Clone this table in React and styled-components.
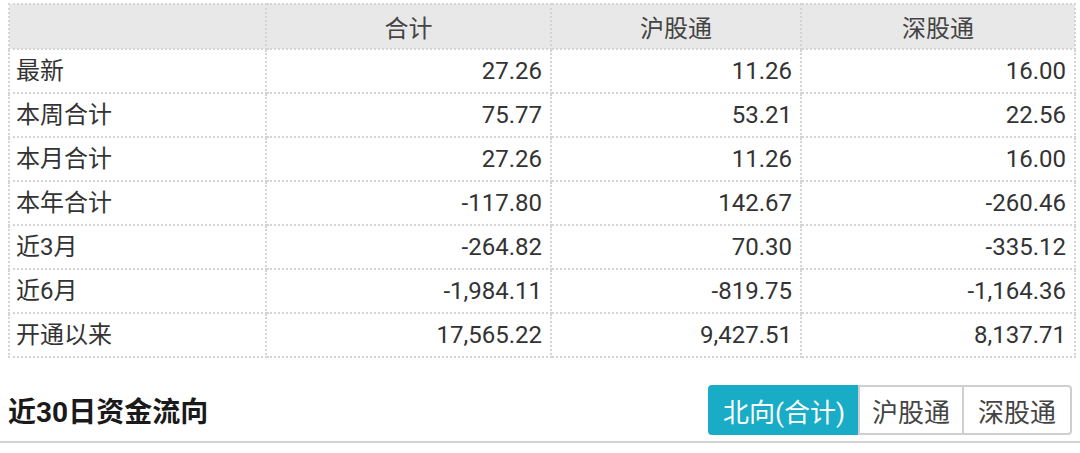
import React from "react";
import styled, { createGlobalStyle } from "styled-components";

const Global = createGlobalStyle`
  html, body { margin: 0; padding: 0; background: #fff; }
  body { font-family: Roboto, "Noto Sans CJK SC", "Noto Sans", sans-serif; }
`;

const Page = styled.div`
  width: 1080px;
  padding-top: 3px;
`;

const Table = styled.table`
  margin-left: 8px;
  width: 1066px;
  border-collapse: collapse;
  table-layout: fixed;
  border: 2px dotted #cfcfcf;
  font-size: 24px;
  color: #333;
`;

const Th = styled.th`
  height: 43px;
  background: #e8e8e8;
  font-weight: normal;
  text-align: center;
  border: 2px dotted #d4d4d4;
  color: #444;
  padding: 0;
`;

const Td = styled.td`
  height: 42px;
  border: 2px dotted #d4d4d4;
  padding: 0 ${(p) => (p.$label ? "0 0 6px" : "8px 0 0")};
  text-align: ${(p) => (p.$label ? "left" : "right")};
  white-space: nowrap;
  line-height: 1;
`;

const Bar = styled.div`
  display: flex;
  align-items: center;
  justify-content: space-between;
  margin-top: 27px;
  padding: 0 8px 6px 8px;
  border-bottom: 2px solid #d2d2d2;
`;

const Title = styled.h2`
  margin: 0;
  font-size: 28px;
  font-weight: bold;
  color: #1a1a1a;
`;

const Group = styled.div`
  display: flex;
`;

const Tab = styled.button`
  height: 50px;
  padding: 0 ${(p) => p.$pad}px;
  font-family: inherit;
  font-size: 26px;
  border: 2px solid ${(p) => (p.$active ? "#18acc6" : "#cfcfcf")};
  margin-left: -2px;
  background: ${(p) => (p.$active ? "#18acc6" : "#fff")};
  color: ${(p) => (p.$active ? "#fff" : "#444")};
  cursor: pointer;
  &:first-child { border-radius: 4px 0 0 4px; margin-left: 0; }
  &:last-child { border-radius: 0 4px 4px 0; }
`;

const rows = [
  ["最新", "27.26", "11.26", "16.00"],
  ["本周合计", "75.77", "53.21", "22.56"],
  ["本月合计", "27.26", "11.26", "16.00"],
  ["本年合计", "-117.80", "142.67", "-260.46"],
  ["近3月", "-264.82", "70.30", "-335.12"],
  ["近6月", "-1,984.11", "-819.75", "-1,164.36"],
  ["开通以来", "17,565.22", "9,427.51", "8,137.71"],
];

export default function App() {
  return (
    <Page>
      <Global />
      <Table>
        <colgroup>
          <col style={{ width: 257 }} />
          <col style={{ width: 285 }} />
          <col style={{ width: 250 }} />
          <col style={{ width: 274 }} />
        </colgroup>
        <thead>
          <tr>
            <Th></Th>
            <Th>合计</Th>
            <Th>沪股通</Th>
            <Th>深股通</Th>
          </tr>
        </thead>
        <tbody>
          {rows.map((r) => (
            <tr key={r[0]}>
              <Td $label>{r[0]}</Td>
              <Td>{r[1]}</Td>
              <Td>{r[2]}</Td>
              <Td>{r[3]}</Td>
            </tr>
          ))}
        </tbody>
      </Table>
      <Bar>
        <Title>近30日资金流向</Title>
        <Group>
          <Tab $active $pad={13}>北向(合计)</Tab>
          <Tab $pad={12}>沪股通</Tab>
          <Tab $pad={14}>深股通</Tab>
        </Group>
      </Bar>
    </Page>
  );
}
